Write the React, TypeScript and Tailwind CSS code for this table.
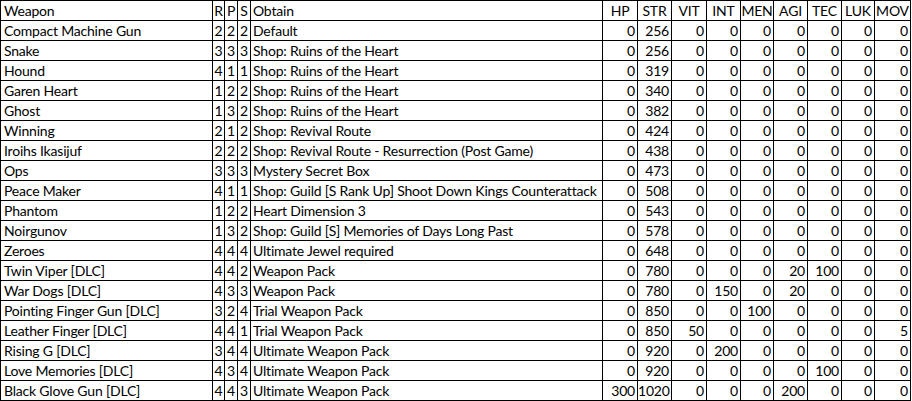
import clsx from 'clsx'

type Row = [string, number, number, number, string, number[]]

const rows: Row[] = [
  ['Compact Machine Gun', 2, 2, 2, 'Default', [0, 256, 0, 0, 0, 0, 0, 0, 0]],
  ['Snake', 3, 3, 3, 'Shop: Ruins of the Heart', [0, 256, 0, 0, 0, 0, 0, 0, 0]],
  ['Hound', 4, 1, 1, 'Shop: Ruins of the Heart', [0, 319, 0, 0, 0, 0, 0, 0, 0]],
  ['Garen Heart', 1, 2, 2, 'Shop: Ruins of the Heart', [0, 340, 0, 0, 0, 0, 0, 0, 0]],
  ['Ghost', 1, 3, 2, 'Shop: Ruins of the Heart', [0, 382, 0, 0, 0, 0, 0, 0, 0]],
  ['Winning', 2, 1, 2, 'Shop: Revival Route', [0, 424, 0, 0, 0, 0, 0, 0, 0]],
  ['Iroihs Ikasijuf', 2, 2, 2, 'Shop: Revival Route - Resurrection (Post Game)', [0, 438, 0, 0, 0, 0, 0, 0, 0]],
  ['Ops', 3, 3, 3, 'Mystery Secret Box', [0, 473, 0, 0, 0, 0, 0, 0, 0]],
  ['Peace Maker', 4, 1, 1, 'Shop: Guild [S Rank Up] Shoot Down Kings Counterattack', [0, 508, 0, 0, 0, 0, 0, 0, 0]],
  ['Phantom', 1, 2, 2, 'Heart Dimension 3', [0, 543, 0, 0, 0, 0, 0, 0, 0]],
  ['Noirgunov', 1, 3, 2, 'Shop: Guild [S] Memories of Days Long Past', [0, 578, 0, 0, 0, 0, 0, 0, 0]],
  ['Zeroes', 4, 4, 4, 'Ultimate Jewel required', [0, 648, 0, 0, 0, 0, 0, 0, 0]],
  ['Twin Viper [DLC]', 4, 4, 2, 'Weapon Pack', [0, 780, 0, 0, 0, 20, 100, 0, 0]],
  ['War Dogs [DLC]', 4, 3, 3, 'Weapon Pack', [0, 780, 0, 150, 0, 20, 0, 0, 0]],
  ['Pointing Finger Gun [DLC]', 3, 2, 4, 'Trial Weapon Pack', [0, 850, 0, 0, 100, 0, 0, 0, 0]],
  ['Leather Finger [DLC]', 4, 4, 1, 'Trial Weapon Pack', [0, 850, 50, 0, 0, 0, 0, 0, 5]],
  ['Rising G [DLC]', 3, 4, 4, 'Ultimate Weapon Pack', [0, 920, 0, 200, 0, 0, 0, 0, 0]],
  ['Love Memories [DLC]', 4, 3, 4, 'Ultimate Weapon Pack', [0, 920, 0, 0, 0, 0, 100, 0, 0]],
  ['Black Glove Gun [DLC]', 4, 4, 3, 'Ultimate Weapon Pack', [300, 1020, 0, 0, 0, 200, 0, 0, 0]],
]

const stats = ['HP', 'STR', 'VIT', 'INT', 'MEN', 'AGI', 'TEC', 'LUK', 'MOV']

const cell = 'h-5 border-r border-b border-black leading-[20px] whitespace-nowrap overflow-hidden'

export default function App() {
  return (
    <div className="w-[912px] h-[401px] bg-white text-black font-['Lato','Liberation_Sans',sans-serif] text-[14px] tracking-[-0.2px]">
      <div className="grid w-[911px] grid-cols-[212px_12px_13px_13px_352px_35px_34px_35px_34px_33px_34px_34px_33px_36px] border-l border-t border-black">
        <div className={clsx(cell, 'pl-[3px]')}>Weapon</div>
        <div className={clsx(cell, 'text-center')}>R</div>
        <div className={clsx(cell, 'text-center')}>P</div>
        <div className={clsx(cell, 'text-center')}>S</div>
        <div className={clsx(cell, 'pl-[2px]')}>Obtain</div>
        {stats.map((s) => (
          <div key={s} className={clsx(cell, 'text-center')}>
            {s}
          </div>
        ))}
        {rows.map(([name, r, p, s, obtain, values]) => (
          <div key={name} className="contents">
            <div className={clsx(cell, 'pl-[3px]')}>{name}</div>
            <div className={clsx(cell, 'text-center')}>{r}</div>
            <div className={clsx(cell, 'text-center')}>{p}</div>
            <div className={clsx(cell, 'text-center')}>{s}</div>
            <div className={clsx(cell, 'pl-[2px]')}>{obtain}</div>
            {values.map((v, i) => (
              <div key={i} className={clsx(cell, 'text-right pr-[2px]')}>
                {v}
              </div>
            ))}
          </div>
        ))}
      </div>
    </div>
  )
}
